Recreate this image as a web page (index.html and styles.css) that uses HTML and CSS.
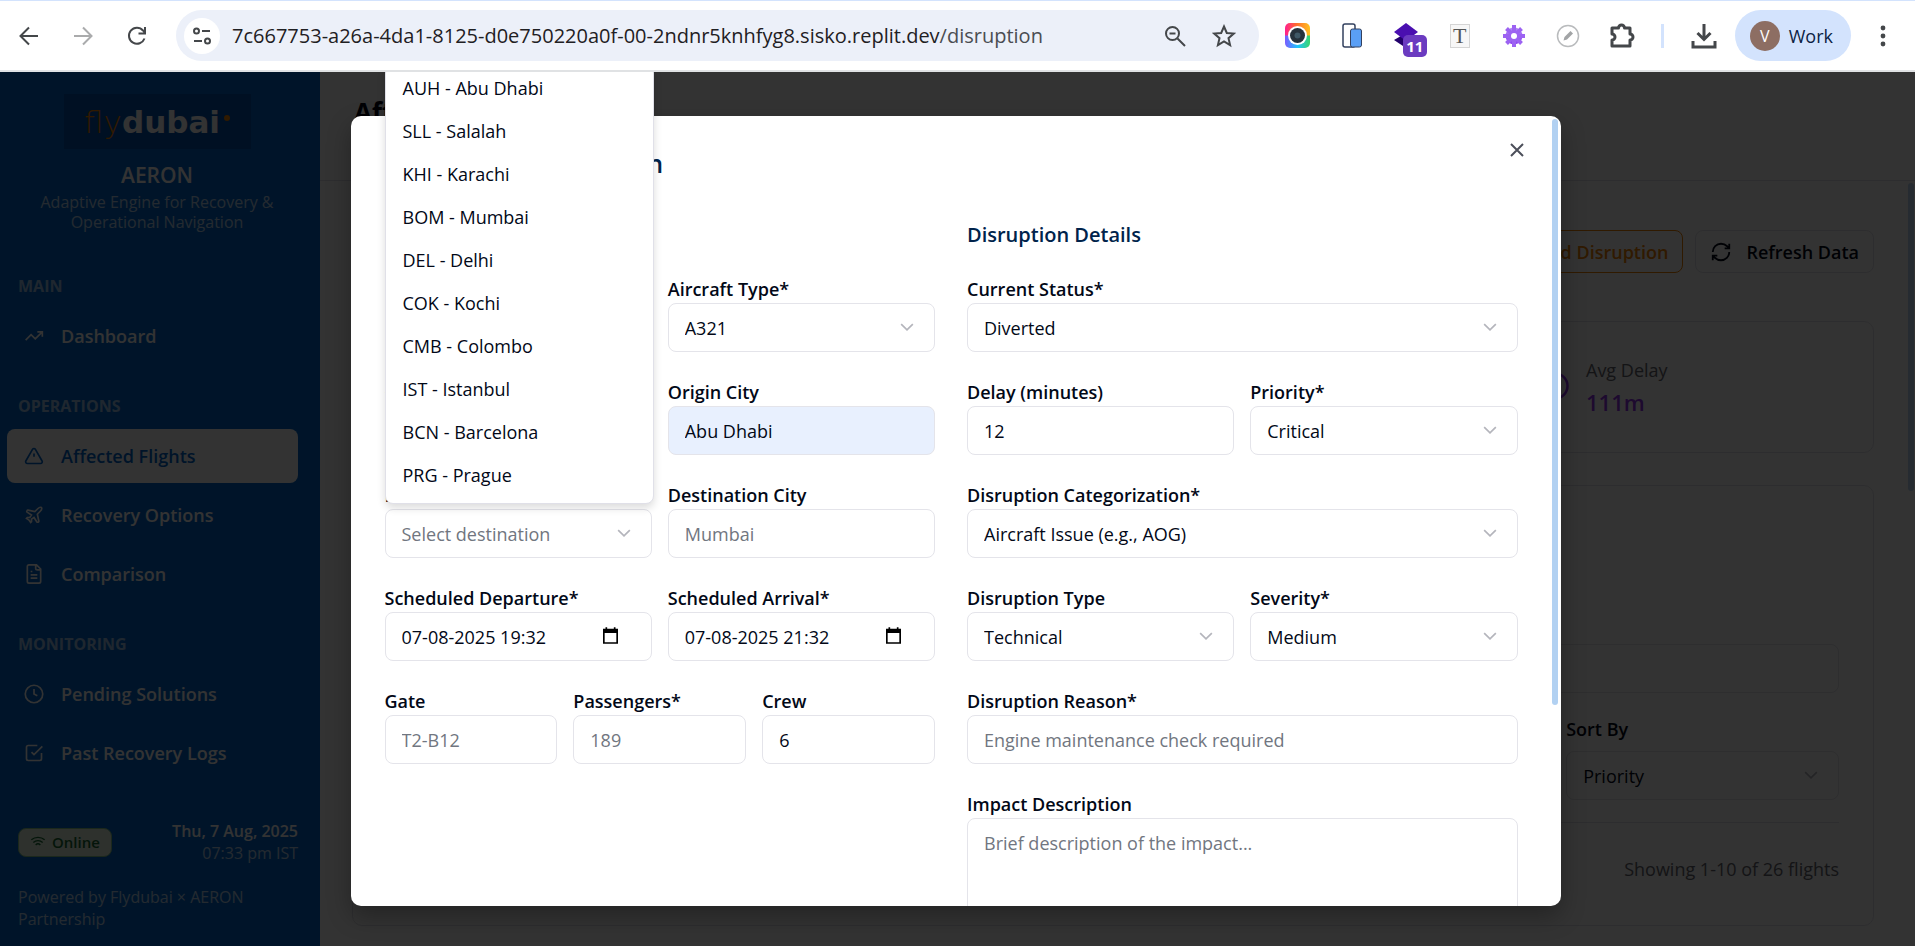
FILE: index.html
```html
<!DOCTYPE html>
<html lang="en">
<head>
<meta charset="utf-8">
<title>AERON - Affected Flights</title>
<link rel="stylesheet" href="styles.css">
</head>
<body>
<svg width="0" height="0" class="defs" aria-hidden="true">
  <defs>
    <linearGradient id="rainbow" x1="0" y1="0" x2="1" y2="0"><stop offset="0" stop-color="#ff1f8f"/><stop offset=".45" stop-color="#ff6a2f"/><stop offset="1" stop-color="#ffc21f"/></linearGradient>
    <linearGradient id="rainbow-low" x1="0" y1="0" x2="1" y2="0"><stop offset="0" stop-color="#7a5cff"/><stop offset=".5" stop-color="#1fc4ff"/><stop offset="1" stop-color="#38d66b"/></linearGradient>
    <linearGradient id="violet" x1="0" y1="0" x2="0" y2="1"><stop offset="0" stop-color="#b48cf5"/><stop offset="1" stop-color="#8a3ff0"/></linearGradient>
    <symbol id="chevron" viewBox="0 0 24 24"><path d="m5 8.500 7 7 7-7"/></symbol>
    <symbol id="calendar" viewBox="0 0 18 20"><path d="M1 3h16v16H1z" fill="none" stroke="#000" stroke-width="2"/><path d="M1 3h16v4H1zM3 0h2v3H3zM13 0h2v3h-2z" fill="#000"/></symbol>
  </defs>
</svg>

<header class="browser">
  <nav class="browser-nav">
    <button class="tool" aria-label="Back"><svg width="20" height="20" viewBox="0 0 20 20" class="ink"><path d="M19 10H2M10 1.500 1.500 10l8.500 8.500"/></svg></button>
    <button class="tool faded" aria-label="Forward"><svg width="20" height="20" viewBox="0 0 20 20" class="ink"><path d="M1 10h17M10 1.500 18.500 10 10 18.500"/></svg></button>
    <button class="tool" aria-label="Reload"><svg width="20" height="20" viewBox="0 0 20 20" class="ink"><path d="M17.500 12.500A8 8 0 1 1 16 4.500l2 2.500M18 1v6.500h-6.500"/></svg></button>
  </nav>
  <div class="address">
    <button class="site-info" aria-label="Site information"><svg width="20" height="20" viewBox="0 0 20 20" class="ink"><circle cx="4.500" cy="5" r="2.500"/><path d="M10 5h8M2 15h8"/><circle cx="15.500" cy="15" r="2.500"/></svg></button>
    <span class="url">7c667753-a26a-4da1-8125-d0e750220a0f-00-2ndnr5knhfyg8.sisko.replit.dev<span class="path">/disruption</span></span>
    <button class="tool" aria-label="Zoom"><svg width="22" height="22" viewBox="0 0 22 22" class="ink"><circle cx="8.500" cy="8.500" r="6.500"/><path d="M13.500 13.500 21 21M5.500 8.500h6"/></svg></button>
    <button class="tool" aria-label="Bookmark"><svg width="24" height="24" viewBox="0 0 24 24" class="ink"><path d="m12 2.500 2.800 6.500 7 .6-5.300 4.600 1.600 6.900L12 17.500l-6.100 3.600 1.600-6.900L2.200 9.600l7-.6z"/></svg></button>
  </div>
  <div class="extensions">
    <button class="tool" aria-label="Camera"><svg width="25" height="25" viewBox="0 0 25 25"><path d="M0 13V5a5 5 0 0 1 5-5h15a5 5 0 0 1 5 5v8z" fill="url(#rainbow)"/><path d="M0 12.500V20a5 5 0 0 0 5 5h15a5 5 0 0 0 5-5v-7.500z" fill="url(#rainbow-low)"/><circle cx="12.500" cy="12.500" r="9.500" fill="#fff"/><circle cx="12.500" cy="12.500" r="7.500" fill="#26323c"/><circle cx="12.500" cy="12.500" r="3" fill="#3f5866"/></svg></button>
    <button class="tool" aria-label="Devices"><svg width="22" height="25" viewBox="0 0 22 25"><rect x="2" y="1" width="12" height="23" rx="2" fill="#fff" stroke="#33415f" stroke-width="1.500"/><rect x="9.500" y="6" width="11" height="18" rx="2" fill="#5a9ff5" stroke="#33415f"/></svg></button>
    <button class="tool badged" aria-label="Layers"><svg width="26" height="26" viewBox="0 0 26 26"><path d="m1 17 12-7 12 7-12 8z" fill="#22006b"/><path d="m13 0 12 9-12 9L1 9z" fill="#4a0fb0"/></svg><span class="badge">11</span></button>
    <button class="tool" aria-label="Text"><span class="text-ext">T</span></button>
    <button class="tool" aria-label="Settings"><svg width="24" height="24" viewBox="0 0 24 24"><circle cx="12" cy="12" r="8.500" fill="url(#violet)"/><path d="M12 1v22M1 12h22M4.500 4.500l15 15M19.500 4.500l-15 15" stroke="#9c62f2" stroke-width="4"/><circle cx="12" cy="12" r="3" fill="#fff"/></svg></button>
    <button class="tool" aria-label="Pencil"><svg width="24" height="24" viewBox="0 0 24 24"><circle cx="12" cy="12" r="10.500" fill="#fff" stroke="#b9bbbd" stroke-width="1.500"/><path d="m7.500 16.500 1-3.500 6-6 2.500 2.500-6 6z" fill="#a2a4a6"/></svg></button>
    <button class="tool" aria-label="Extensions"><svg width="26" height="26" viewBox="0 0 26 26" class="ink bold"><path d="M3 5h6.500a3 3 0 0 1 6 0H21v6a3 3 0 0 1 0 6v6H3v-6a3 3 0 0 0 0-6z" stroke-linejoin="round"/></svg></button>
    <span class="separator"></span>
    <button class="tool" aria-label="Downloads"><svg width="26" height="26" viewBox="0 0 26 26" class="ink bold"><path d="M13 1v15M6.500 10l6.500 6.500 6.500-6.500M2 18v6h22v-6"/></svg></button>
  </div>
  <button class="profile"><span class="avatar">V</span>Work</button>
  <button class="tool" aria-label="Menu"><svg width="6" height="22" viewBox="0 0 6 22" fill="#44474a"><circle cx="3" cy="3" r="2.400"/><circle cx="3" cy="11" r="2.400"/><circle cx="3" cy="19" r="2.400"/></svg></button>
</header>

<div class="viewport">
  <aside class="sidebar">
    <div class="brand">
      <div class="logo"><span class="fly">fly</span><span class="dubai">dubai</span><span class="dot"></span></div>
      <h2>AERON</h2>
      <p>Adaptive Engine for Recovery &amp; Operational Navigation</p>
    </div>
    <nav class="menu">
      <h3>MAIN</h3>
      <a href="#"><svg viewBox="0 0 24 24"><path d="M22 7 13.500 15.500l-5-5L2 17M16 7h6v6"/></svg>Dashboard</a>
      <h3>OPERATIONS</h3>
      <a href="#" class="active"><svg viewBox="0 0 24 24"><path d="m21.700 18-8-14a2 2 0 0 0-3.500 0l-8 14A2 2 0 0 0 4 21h16a2 2 0 0 0 1.700-3M12 9v4M12 17h.01"/></svg>Affected Flights</a>
      <a href="#"><svg viewBox="0 0 24 24"><path d="M17.800 19.200 16 11l3.500-3.500C21 6 21.500 4 21 3c-1-.5-3 0-4.500 1.500L13 8 4.800 6.200c-.5-.1-.9.1-1.100.5l-.3.500c-.2.500-.1 1 .3 1.300L9 12l-2 3H4l-1 1 3 2 2 3 1-1v-3l3-2 3.500 5.300c.3.400.8.500 1.300.3l.5-.2c.4-.3.600-.7.500-1.200z"/></svg>Recovery Options</a>
      <a href="#"><svg viewBox="0 0 24 24"><path d="M15 1H6a2 2 0 0 0-2 2v18a2 2 0 0 0 2 2h12a2 2 0 0 0 2-2V6zM14 1v4a2 2 0 0 0 2 2h4M10 9H8M16 13H8M16 17H8"/></svg>Comparison</a>
      <h3>MONITORING</h3>
      <a href="#"><svg viewBox="0 0 24 24"><circle cx="12" cy="12" r="10.500"/><path d="M12 6v6l4 2"/></svg>Pending Solutions</a>
      <a href="#"><svg viewBox="0 0 24 24"><path d="m9 11 3 3L22 4M21 12v7a2 2 0 0 1-2 2H5a2 2 0 0 1-2-2V5a2 2 0 0 1 2-2h11"/></svg>Past Recovery Logs</a>
    </nav>
    <footer class="side-foot">
      <div class="status-row">
        <span class="online"><svg viewBox="0 0 24 24"><path d="M12 20h.01M2 8.800a15 15 0 0 1 20 0M5 12.900a10 10 0 0 1 14 0M8.500 16.400a5 5 0 0 1 7 0"/></svg>Online</span>
        <div class="clock"><strong>Thu, 7 Aug, 2025</strong><span>07:33 pm IST</span></div>
      </div>
      <p>Powered by Flydubai × AERON Partnership</p>
    </footer>
  </aside>

  <main class="main">
    <header class="page-head"><h1>Affected Flights</h1></header>
    <div class="page-body">
      <div class="actions">
        <button class="btn accent">Add Disruption</button>
        <button class="btn"><svg viewBox="0 0 24 24"><path d="M3 12a9 9 0 0 1 9-9 9.800 9.800 0 0 1 6.700 2.700L21 8M21 3v5h-5M21 12a9 9 0 0 1-9 9 9.800 9.800 0 0 1-6.700-2.700L3 16M8 16H3v5"/></svg>Refresh Data</button>
      </div>
      <div class="stats">
        <section class="card stat"></section>
        <section class="card stat"></section>
        <section class="card stat"></section>
        <section class="card stat"><svg viewBox="0 0 24 24"><circle cx="12" cy="12" r="10"/><path d="M12 6v6l4 2"/></svg><div><span>Avg Delay</span><strong>111m</strong></div></section>
      </div>
      <section class="card filters">
        <input class="control search" type="search" aria-label="Search flights">
        <div class="filter-grid">
          <div class="field sort">
            <label for="sort">Sort By</label>
            <div class="select"><select id="sort" class="control"><option>Priority</option></select><svg><use href="#chevron"/></svg></div>
          </div>
        </div>
        <p class="showing">Showing 1-10 of 26 flights</p>
      </section>
    </div>
    <span class="page-scroll"></span>
  </main>

  <div class="overlay">
    <div class="modal" role="dialog" aria-labelledby="dialog-title">
      <span class="modal-scroll"></span>
      <button class="close" aria-label="Close"><svg viewBox="0 0 14 14"><path d="m1 1 12 12M13 1 1 13"/></svg></button>
      <h2 id="dialog-title" class="modal-title"><svg viewBox="0 0 24 24"><path d="m21.700 18-8-14a2 2 0 0 0-3.500 0l-8 14A2 2 0 0 0 4 21h16a2 2 0 0 0 1.700-3M12 9v4M12 17h.01"/></svg>Add New Disruption</h2>
      <form class="form">
        <section class="column">
          <h3>Flight Details</h3>
          <div class="field w3"><label for="flight">Flight Number*</label><input id="flight" class="control"></div>
          <div class="field w3"><label for="aircraft">Aircraft Type*</label><div class="select"><select id="aircraft" class="control"><option>A321</option></select><svg><use href="#chevron"/></svg></div></div>
          <div class="field w3"><label for="origin">Origin*</label><input id="origin" class="control"></div>
          <div class="field w3"><label for="origin-city">Origin City</label><input id="origin-city" class="control filled" value="Abu Dhabi"></div>
          <div class="field w3"><label for="dest">Destination*</label><div class="select"><select id="dest" class="control muted"><option>Select destination</option></select><svg><use href="#chevron"/></svg></div></div>
          <div class="field w3"><label for="dest-city">Destination City</label><input id="dest-city" class="control" placeholder="Mumbai"></div>
          <div class="field w3"><label for="dep">Scheduled Departure*</label><div class="date"><input id="dep" class="control" value="07-08-2025 19:32"><svg><use href="#calendar"/></svg></div></div>
          <div class="field w3"><label for="arr">Scheduled Arrival*</label><div class="date"><input id="arr" class="control" value="07-08-2025 21:32"><svg><use href="#calendar"/></svg></div></div>
          <div class="field w2"><label for="gate">Gate</label><input id="gate" class="control" placeholder="T2-B12"></div>
          <div class="field w2"><label for="pax">Passengers*</label><input id="pax" class="control" placeholder="189"></div>
          <div class="field w2"><label for="crew">Crew</label><input id="crew" class="control" value="6"></div>
        </section>
        <section class="column">
          <h3>Disruption Details</h3>
          <div class="field w6"><label for="status">Current Status*</label><div class="select"><select id="status" class="control"><option>Diverted</option></select><svg><use href="#chevron"/></svg></div></div>
          <div class="field w3"><label for="delay">Delay (minutes)</label><input id="delay" class="control" value="12"></div>
          <div class="field w3"><label for="priority">Priority*</label><div class="select"><select id="priority" class="control"><option>Critical</option></select><svg><use href="#chevron"/></svg></div></div>
          <div class="field w6"><label for="category">Disruption Categorization*</label><div class="select"><select id="category" class="control"><option>Aircraft Issue (e.g., AOG)</option></select><svg><use href="#chevron"/></svg></div></div>
          <div class="field w3"><label for="type">Disruption Type</label><div class="select"><select id="type" class="control"><option>Technical</option></select><svg><use href="#chevron"/></svg></div></div>
          <div class="field w3"><label for="severity">Severity*</label><div class="select"><select id="severity" class="control"><option>Medium</option></select><svg><use href="#chevron"/></svg></div></div>
          <div class="field w6"><label for="reason">Disruption Reason*</label><input id="reason" class="control" placeholder="Engine maintenance check required"></div>
          <div class="field w6"><label for="impact">Impact Description</label><textarea id="impact" class="control" placeholder="Brief description of the impact..."></textarea></div>
        </section>
      </form>
    </div>
    <ul class="popover" role="listbox" aria-label="Destination">
      <li role="option">AUH - Abu Dhabi</li>
      <li role="option">SLL - Salalah</li>
      <li role="option">KHI - Karachi</li>
      <li role="option">BOM - Mumbai</li>
      <li role="option">DEL - Delhi</li>
      <li role="option">COK - Kochi</li>
      <li role="option">CMB - Colombo</li>
      <li role="option">IST - Istanbul</li>
      <li role="option">BCN - Barcelona</li>
      <li role="option">PRG - Prague</li>
    </ul>
  </div>
</div>
</body>
</html>
```

FILE: styles.css
```css
* { box-sizing: border-box; }
html, body { height: 100%; }
body {
  margin: 0;
  display: flex;
  flex-direction: column;
  overflow: hidden;
  font-family: "Open Sans", "Noto Sans", sans-serif;
  font-size: 18px;
  color: #020817;
  background: #fff;
}
h1, h2, h3, p, ul { margin: 0; padding: 0; }
button, input, select, textarea { font: inherit; color: inherit; }
button { border: 0; background: none; padding: 0; }
svg { flex: none; }
.defs { position: absolute; }

/* Browser bar */
.browser {
  flex: none;
  height: 72px;
  display: flex;
  align-items: center;
  padding: 0 5px 0 2px;
  background: #fff;
  border-top: 1px solid #d3e3fd;
  border-bottom: 2px solid #e0e2e4;
}
.browser-nav, .extensions { display: flex; align-items: center; }
.tool {
  width: 54px;
  height: 50px;
  display: flex;
  align-items: center;
  justify-content: center;
}
.faded { opacity: .45; }
.ink { fill: none; stroke: #44474a; stroke-width: 2; }
.bold { stroke-width: 3; }
.address {
  flex: 1;
  height: 51px;
  margin: 0 12px;
  padding: 0 10px 0 8px;
  display: flex;
  align-items: center;
  border-radius: 26px;
  background: #ecf0f9;
}
.address .tool { width: 49px; }
.site-info {
  width: 36px;
  height: 36px;
  display: flex;
  align-items: center;
  justify-content: center;
  border-radius: 50%;
  background: #fff;
}
.url { flex: 1; margin-left: 12px; font-size: 20px; white-space: nowrap; color: #1f2023; }
.path { color: #4a4d52; }
.badged { position: relative; }
.badge {
  position: absolute;
  left: 24px;
  top: 24px;
  width: 24px;
  height: 22px;
  border-radius: 5px;
  background: #6b3bc0;
  color: #fff;
  font-size: 15px;
  font-weight: 700;
  line-height: 22px;
}
.text-ext {
  width: 20px;
  height: 24px;
  border: 1px solid #d5d5d5;
  background: #f7f7f7;
  font: 22px/22px "Liberation Serif", serif;
  color: #555;
}
.separator { width: 3px; height: 24px; margin: 0 13px 0 12px; background: #d3e3fd; }
.profile {
  height: 51px;
  margin: 0 5px 0 4px;
  padding: 0 18px 0 15px;
  display: flex;
  align-items: center;
  gap: 9px;
  border-radius: 26px;
  background: #d3e3fd;
  color: #0b1f44;
}
.avatar {
  width: 30px;
  height: 30px;
  border-radius: 50%;
  background: #8d6e63;
  color: #fff;
  font-size: 16px;
  line-height: 30px;
}

/* Page frame */
.viewport { position: relative; flex: 1; min-height: 0; display: flex; overflow: hidden; }
.sidebar {
  width: 320px;
  display: flex;
  flex-direction: column;
  background: #0066cc;
  color: #fff;
}
.brand { padding: 22px 30px 0 24px; text-align: center; }
.logo {
  width: 187px;
  height: 55px;
  margin: 0 auto;
  display: flex;
  align-items: center;
  justify-content: center;
  background: #0052ad;
  font: 31px/40px "DejaVu Sans", sans-serif;
}
.fly { color: #f08000; font-weight: 200; }
.dubai { font-weight: 700; }
.dot { width: 6px; height: 6px; margin: 0 0 8px 4px; border-radius: 50%; background: #f08000; }
.brand h2 { margin: 11px 0 2px; font-size: 21px; line-height: 30px; font-weight: 600; }
.brand p { font-size: 16px; line-height: 20px; opacity: .7; }
.menu { padding: 40px 22px 0 7px; display: flex; flex-direction: column; gap: 5px; }
.menu h3 {
  height: 28px;
  margin: 0 0 4px 11px;
  font-size: 16px;
  line-height: 28px;
  font-weight: 700;
  opacity: .6;
}
.menu a + h3 { margin-top: 24px; }
.menu a {
  height: 54px;
  padding: 0 17px;
  display: flex;
  align-items: center;
  gap: 17px;
  border-radius: 8px;
  color: #fff;
  font-weight: 600;
  text-decoration: none;
}
.menu svg { width: 20px; height: 20px; fill: none; stroke: currentColor; stroke-width: 2; }
.menu .active { background: #fff; color: #0066cc; }
.side-foot { margin-top: auto; padding: 0 22px 16px 18px; font-size: 16px; line-height: 22px; }
.status-row { display: flex; align-items: center; justify-content: space-between; margin-bottom: 22px; }
.online {
  height: 29px;
  padding: 0 11px;
  display: flex;
  align-items: center;
  gap: 6px;
  border: 1px solid #86c58a;
  border-radius: 8px;
  background: #e3f5df;
  color: #176b34;
  font-size: 15px;
  font-weight: 600;
}
.online svg { width: 16px; height: 16px; fill: none; stroke: currentColor; stroke-width: 2; }
.clock { display: flex; flex-direction: column; text-align: right; }
.clock strong { font-weight: 600; }
.clock span, .side-foot p { opacity: .7; }

.main { position: relative; flex: 1; display: flex; flex-direction: column; background: #fff; }
.page-head { height: 109px; padding: 20px 34px; border-bottom: 1px solid #e2e2e8; }
.page-head h1 { font-size: 26px; line-height: 40px; font-weight: 700; }
.page-body { padding: 49px 41px 0 32px; }
.actions { display: flex; justify-content: flex-end; gap: 12px; margin-bottom: 48px; }
.btn {
  height: 43px;
  padding: 0 14px;
  display: flex;
  align-items: center;
  gap: 14px;
  border: 1px solid #e2e2e8;
  border-radius: 8px;
  font-weight: 600;
}
.btn svg { width: 22px; height: 22px; fill: none; stroke: currentColor; stroke-width: 2; }
.accent { border-color: #f08000; color: #f08000; }
.card { border: 1px solid #e2e2e8; border-radius: 10px; }
.stats { display: grid; grid-template-columns: repeat(4, 1fr); gap: 26px; margin-bottom: 32px; }
.stat { height: 132px; padding: 0 26px 2px; display: flex; align-items: center; gap: 16px; }
.stat svg { width: 30px; height: 30px; fill: none; stroke: #9333ea; stroke-width: 2; }
.stat div { display: flex; flex-direction: column; }
.stat span { color: #64656e; line-height: 32px; }
.stat strong { color: #9333ea; font-size: 22px; line-height: 32px; font-weight: 600; }
.filters { padding: 158px 34px 0; height: 441px; }
.filter-grid {
  display: grid;
  grid-template-columns: repeat(5, 1fr);
  gap: 22px;
  padding: 18px 0 22px;
  border-bottom: 1px solid #e2e2e8;
}
.sort { grid-column: 5; }
.sort label { padding: 4px 0 8px; }
.showing { margin-top: 32px; line-height: 28px; text-align: right; color: #64656e; }
.page-scroll {
  position: absolute;
  right: 1px;
  top: 111px;
  width: 6px;
  height: 308px;
  border-radius: 3px;
  background: #bcd8f5;
}

/* Form controls */
.field { display: flex; flex-direction: column; }
.field label { line-height: 28px; font-weight: 600; }
.control {
  width: 100%;
  height: 49px;
  padding: 0 16px;
  border: 1px solid #e4e4ea;
  border-radius: 8px;
  background: transparent;
  appearance: none;
  outline: 0;
}
.control::placeholder, .muted { color: #717680; opacity: 1; }
.filled { background: #e8f0fe; }
textarea.control { height: 110px; padding: 12px 16px; resize: none; }
.select, .date { position: relative; }
.select svg {
  position: absolute;
  right: 18px;
  top: 14px;
  width: 20px;
  height: 20px;
  fill: none;
  stroke: #b4b5bc;
  stroke-width: 2;
  pointer-events: none;
}
.date svg { position: absolute; right: 34px; top: 15px; width: 15px; height: 17px; }

/* Dialog */
.overlay {
  position: absolute;
  inset: 0;
  display: flex;
  justify-content: center;
  padding: 44px 4px 40px 0;
  background: rgba(0, 0, 0, .8);
}
.modal {
  position: relative;
  width: 100%;
  max-width: 1210px;
  padding: 31px 43px 0 34px;
  overflow: hidden;
  border-radius: 10px;
  background: #fff;
  box-shadow: 0 10px 24px rgba(0, 0, 0, .3);
}
.modal-scroll {
  position: absolute;
  right: 3px;
  top: 3px;
  width: 6px;
  height: 586px;
  border-radius: 3px;
  background: #b2d1f2;
}
.close { position: absolute; right: 37px; top: 27px; }
.close svg { display: block; width: 14px; height: 14px; fill: none; stroke: #4c4f5a; stroke-width: 2; }
.modal-title {
  display: flex;
  align-items: center;
  gap: 10px;
  font-size: 25px;
  line-height: 32px;
  font-weight: 600;
  color: #00234b;
}
.modal-title svg { width: 26px; height: 26px; fill: none; stroke: #f59e0b; stroke-width: 2; }
.form { display: grid; grid-template-columns: 1fr 1fr; gap: 32px; margin-top: 38px; }
.column { display: grid; grid-template-columns: repeat(6, 1fr); column-gap: 16px; row-gap: 26px; align-content: start; }
.column h3 {
  grid-column: span 6;
  margin-bottom: -4px;
  font-size: 20px;
  line-height: 36px;
  font-weight: 600;
  color: #00234b;
}
.w2 { grid-column: span 2; }
.w3 { grid-column: span 3; }
.w6 { grid-column: span 6; }
.popover {
  position: absolute;
  left: calc(50% - 573px);
  top: -7px;
  width: 269px;
  padding: 1px 0 6px;
  list-style: none;
  border: 1px solid #e0e0e8;
  border-radius: 8px;
  background: #fff;
  box-shadow: 0 4px 8px rgba(0, 0, 0, .14);
}
.popover li { padding: 0 17px; line-height: 43px; }
```
